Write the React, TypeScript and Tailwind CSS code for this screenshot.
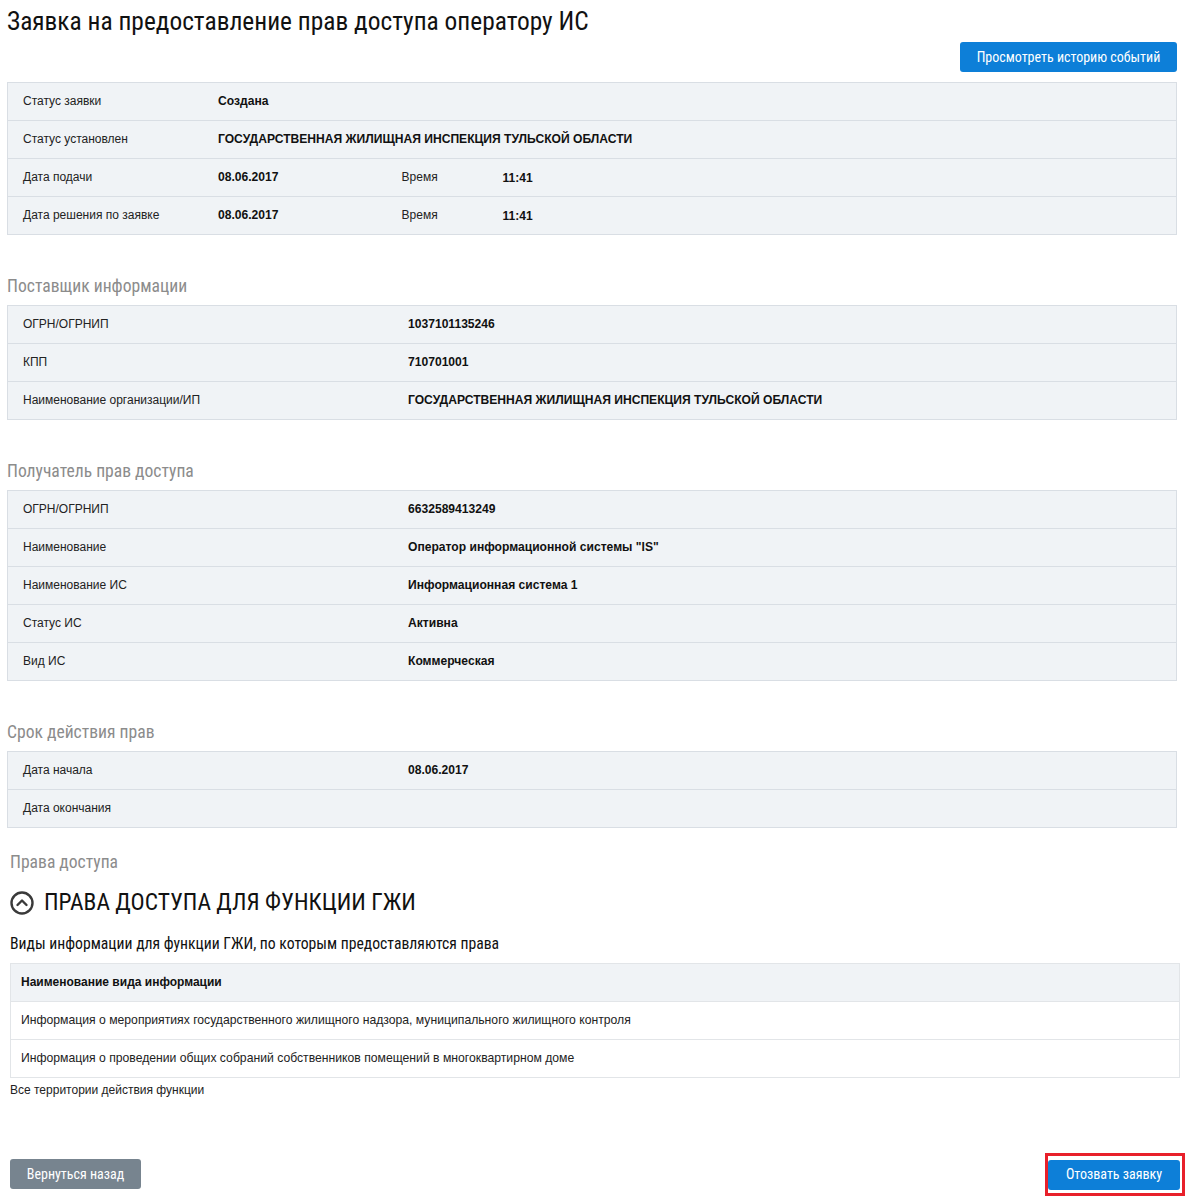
import { ReactNode } from 'react';

const cond = "font-['Roboto_Condensed','Liberation_Sans_Narrow','DejaVu_Sans_Condensed',Roboto,sans-serif]";
const body = "font-['Liberation_Sans',Arial,sans-serif]";

type Row = { label: string; value?: string; extra?: [string, string] };

function InfoTable({ rows, labelWidth }: { rows: Row[]; labelWidth: string }) {
  return (
    <div className="border border-[#d9dee4] bg-[#f0f3f6]">
      {rows.map((r, i) => (
        <div
          key={r.label}
          className={`flex items-center pl-[15px] ${i > 0 ? 'h-[38px] border-t border-[#d9dee4]' : 'h-[37px]'}`}
        >
          <div className={`${labelWidth} shrink-0 -mt-[2px] text-[12px] text-[#222]`}>{r.label}</div>
          {r.value && <div className="text-[12.1px] font-bold text-[#111]">{r.value}</div>}
          {r.extra && (
            <>
              <div className="ml-[123px] w-[101px] shrink-0 -mt-[2px] text-[12px] text-[#222]">{r.extra[0]}</div>
              <div className="text-[12px] font-bold text-[#111]">{r.extra[1]}</div>
            </>
          )}
        </div>
      ))}
    </div>
  );
}

function SectionTitle({ children }: { children: ReactNode }) {
  return <h3 className={`${cond} text-[17.6px] text-[#8c8c8c] leading-[18px]`}>{children}</h3>;
}

export default function App() {
  return (
    <div className={`${body} min-h-screen w-[1195px] bg-white pb-2 text-[#111]`}>
      <div className="pl-[7px] pr-[18px]">
        <h1 className={`${cond} pt-[6px] text-[25.4px] leading-[30px] text-[#111]`}>
          Заявка на предоставление прав доступа оператору ИС
        </h1>
        <div className="mt-[6px] flex justify-end">
          <button className={`${cond} h-[30px] w-[217px] rounded-[3px] bg-[#0d7fd8] text-[14px] text-white`}>
            Просмотреть историю событий
          </button>
        </div>

        <div className="mt-[10px]">
          <InfoTable
            labelWidth="w-[195px]"
            rows={[
              { label: 'Статус заявки', value: 'Создана' },
              { label: 'Статус установлен', value: 'ГОСУДАРСТВЕННАЯ ЖИЛИЩНАЯ ИНСПЕКЦИЯ ТУЛЬСКОЙ ОБЛАСТИ' },
              { label: 'Дата подачи', value: '08.06.2017', extra: ['Время', '11:41'] },
              { label: 'Дата решения по заявке', value: '08.06.2017', extra: ['Время', '11:41'] },
            ]}
          />
        </div>

        <div className="mt-[42px] mb-[10px]">
          <SectionTitle>Поставщик информации</SectionTitle>
        </div>
        <InfoTable
          labelWidth="w-[385px]"
          rows={[
            { label: 'ОГРН/ОГРНИП', value: '1037101135246' },
            { label: 'КПП', value: '710701001' },
            { label: 'Наименование организации/ИП', value: 'ГОСУДАРСТВЕННАЯ ЖИЛИЩНАЯ ИНСПЕКЦИЯ ТУЛЬСКОЙ ОБЛАСТИ' },
          ]}
        />

        <div className="mt-[42px] mb-[10px]">
          <SectionTitle>Получатель прав доступа</SectionTitle>
        </div>
        <InfoTable
          labelWidth="w-[385px]"
          rows={[
            { label: 'ОГРН/ОГРНИП', value: '6632589413249' },
            { label: 'Наименование', value: 'Оператор информационной системы "IS"' },
            { label: 'Наименование ИС', value: 'Информационная система 1' },
            { label: 'Статус ИС', value: 'Активна' },
            { label: 'Вид ИС', value: 'Коммерческая' },
          ]}
        />

        <div className="mt-[42px] mb-[10px]">
          <SectionTitle>Срок действия прав</SectionTitle>
        </div>
        <InfoTable
          labelWidth="w-[385px]"
          rows={[
            { label: 'Дата начала', value: '08.06.2017' },
            { label: 'Дата окончания' },
          ]}
        />
      </div>

      <div className="pl-[10px] pr-[15px]">
        <div className="mt-[25px]">
          <SectionTitle>Права доступа</SectionTitle>
        </div>

        <div className="mt-[20px] flex items-center gap-[10px]">
          <svg width="24" height="24" viewBox="0 0 24 24" fill="none">
            <circle cx="12" cy="12" r="10.5" stroke="#3a3a3a" strokeWidth="2.4" />
            <path d="M7.5 14l4.5-4.5 4.5 4.5" stroke="#3a3a3a" strokeWidth="2.4" strokeLinecap="round" strokeLinejoin="round" />
          </svg>
          <h2 className={`${cond} text-[23.5px] leading-none text-[#111]`}>ПРАВА ДОСТУПА ДЛЯ ФУНКЦИИ ГЖИ</h2>
        </div>

        <p className={`${cond} mt-[21px] text-[15.7px] leading-none text-[#111]`}>
          Виды информации для функции ГЖИ, по которым предоставляются права
        </p>

        <div className="mt-[11px] border border-[#e2e5e8]">
          <div className="flex h-[37px] items-center bg-[#f0f3f6] pl-[10px] text-[12px] font-bold">
            Наименование вида информации
          </div>
          <div className="flex h-[38px] items-center border-t border-[#e2e5e8] pl-[10px] text-[12.2px] text-[#222]">
            Информация о мероприятиях государственного жилищного надзора, муниципального жилищного контроля
          </div>
          <div className="flex h-[38px] items-center border-t border-[#e2e5e8] pl-[10px] text-[12.2px] text-[#222]">
            Информация о проведении общих собраний собственников помещений в многоквартирном доме
          </div>
        </div>
        <p className="mt-[3px] text-[12px] text-[#222]">Все территории действия функции</p>

        <div className="mt-[54px] flex items-center justify-between">
          <button className={`${cond} h-[30px] w-[131px] rounded-[3px] bg-[#77848f] text-[14px] text-white`}>
            Вернуться назад
          </button>
          <div className="-mr-[5px] border-[3px] border-[#e8202a] pt-[4px] pb-[3px] pr-[2px]">
            <button className={`${cond} block h-[30px] w-[132px] rounded-[3px] bg-[#0d7fd8] text-[14px] text-white`}>
              Отозвать заявку
            </button>
          </div>
        </div>
      </div>
    </div>
  );
}
